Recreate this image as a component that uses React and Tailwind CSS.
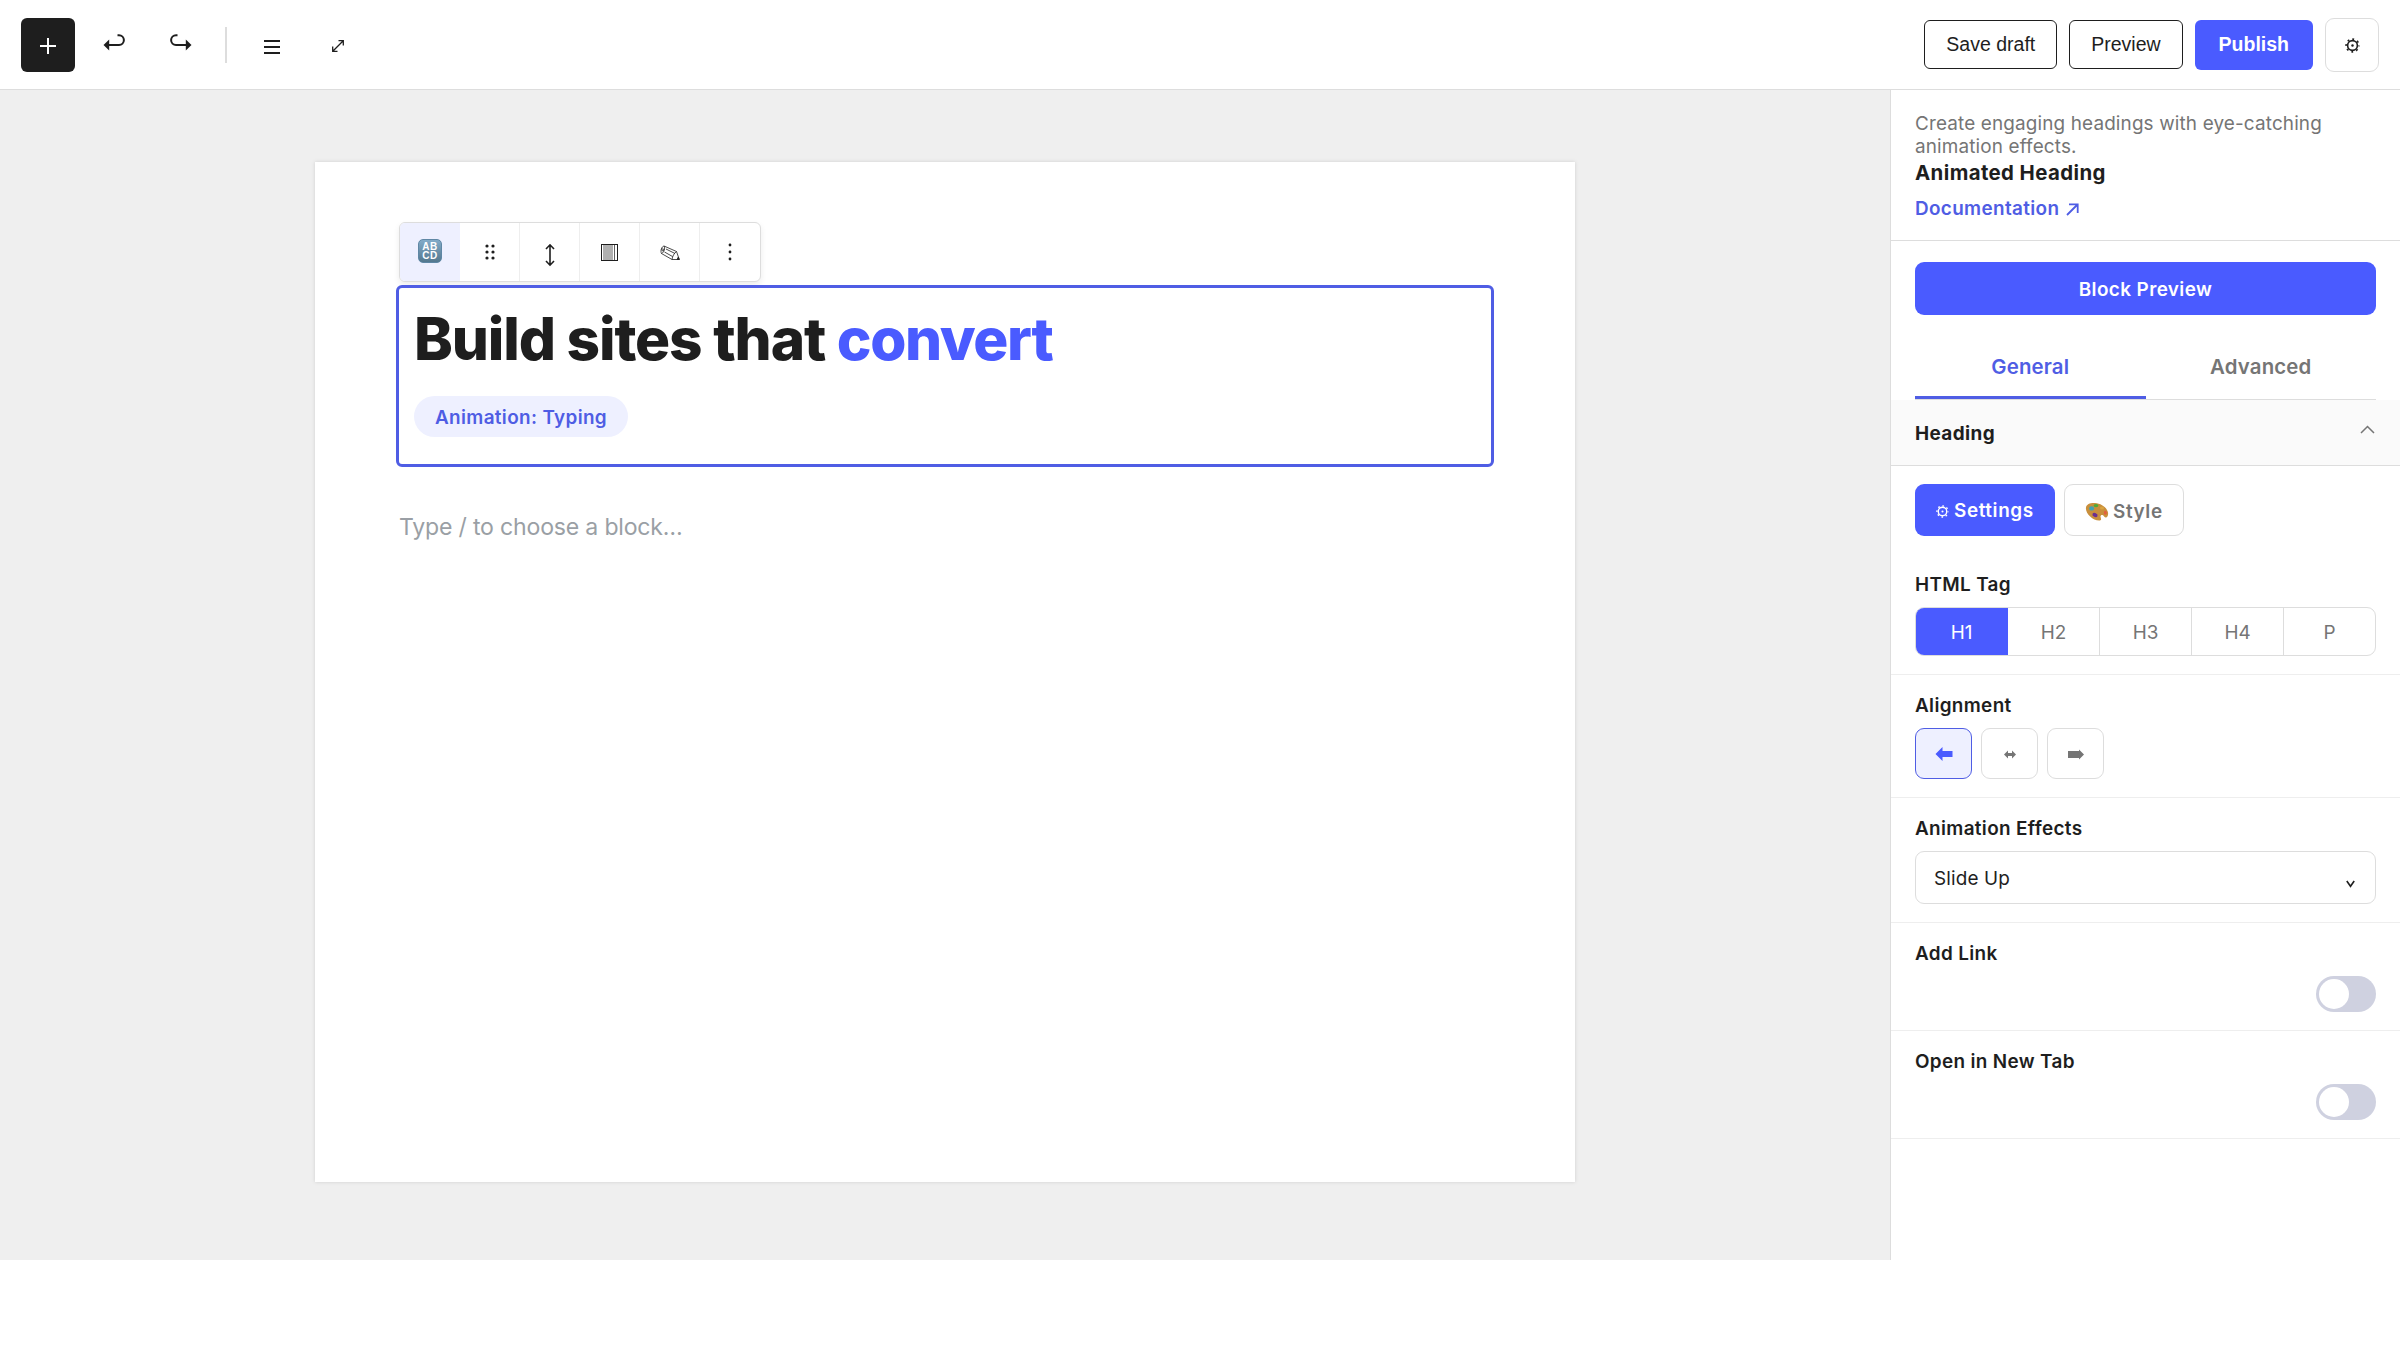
const tags = ["H1", "H2", "H3", "H4", "P"];

function GearIcon({ size, className }) {
  return (
    <svg width={size} height={size} viewBox="0 0 16 16" fill="none" stroke="currentColor" className={className}>
      <circle cx="8" cy="8" r="5.2" strokeWidth="1.7" />
      <circle cx="8" cy="8" r="1.3" fill="currentColor" stroke="none" />
      <circle cx="8" cy="8" r="6.8" strokeWidth="1.8" strokeDasharray="2 3.34" strokeDashoffset="1" />
    </svg>
  );
}

function UndoIcon({ className }) {
  return (
    <svg width="24" height="20" viewBox="0 0 24 20" className={className}>
      <path d="M1.5 12 7.2 6.4V17.6Z" fill="currentColor" />
      <path d="M6 12H17A4.9 4.9 0 0 0 17 2.2H15.5" fill="none" stroke="currentColor" strokeWidth="2" />
    </svg>
  );
}

function PaletteIcon() {
  return (
    <svg width="24" height="20" viewBox="0 0 24 20">
      <path d="M1 5.5C1.5 2 5.5.8 10 1.1c6 .4 12 4.4 13 9.4.5 2.5-.5 4.5-1.800 5-1.5.4-2-1.3-3.2-2.3-1.2-.8-2.7 0-2.5 1.5.2 1.6 1.5 3.4-.7 3.8C8 19 0 11.5 1 5.5Z" fill="#c98f3c" />
      <ellipse cx="6.6" cy="6.4" rx="2.5" ry="2.2" fill="#3fa3b5" />
      <ellipse cx="11" cy="3.6" rx="2.4" ry="1.7" fill="#4faa35" />
      <ellipse cx="17" cy="6" rx="2" ry="1.5" fill="#d9a441" />
      <ellipse cx="20.3" cy="10.8" rx="1.5" ry="2" fill="#e2603f" />
      <ellipse cx="10" cy="13" rx="2.7" ry="2" fill="#6c2f8f" transform="rotate(25 10 13)" />
    </svg>
  );
}

function Toggle() {
  return (
    <div className="flex justify-end">
      <div className="h-9 w-[60px] rounded-full bg-[#cfd1e0] p-[3px]">
        <div className="size-[30px] rounded-full bg-white" />
      </div>
    </div>
  );
}

function TopBar() {
  return (
    <header className="flex h-[90px] items-center border-b border-[#dddddd] bg-white px-[21px]">
      <div className="flex items-center gap-3">
        <button className="flex size-[54px] items-center justify-center rounded-md bg-[#1e1e1e] text-white">
          <svg width="18" height="18" viewBox="0 0 18 18" stroke="currentColor" strokeWidth="2" className="mt-[3px]">
            <path d="M9 1V17M1 9H17" />
          </svg>
        </button>
        <button className="flex size-[54px] items-center justify-center">
          <UndoIcon className="mb-[4px]" />
        </button>
        <button className="flex size-[54px] items-center justify-center">
          <UndoIcon className="mb-[4px] ml-px -scale-x-100" />
        </button>
      </div>
      <div className="mx-[18px] h-9 w-[2px] bg-[#dddddd]" />
      <div className="flex items-center gap-3">
        <button className="flex size-[54px] items-center justify-center">
          <svg width="16" height="14" viewBox="0 0 16 14" fill="currentColor" className="mt-[4px]">
            <path d="M0 0H16V2H0ZM0 6H16V8H0ZM0 12H16V14H0Z" />
          </svg>
        </button>
        <button className="flex size-[54px] items-center justify-center">
          <svg width="14" height="14" viewBox="0 0 14 14" fill="none" stroke="currentColor" strokeWidth="1.3" className="mt-[2px]">
            <path d="M2 12 12 2M7.5 1.7H12.3V6.5M6.5 12.3H1.7V7.5" />
          </svg>
        </button>
      </div>
      <div className="ml-auto flex items-center gap-3 font-['Liberation_Sans',sans-serif] text-[19.5px]">
        <button className="mb-px h-[49px] rounded-md border border-[#1e1e1e] px-[21px] pt-px">Save draft</button>
        <button className="mb-px h-[49px] rounded-md border border-[#1e1e1e] px-[21px] pt-px">Preview</button>
        <button className="h-[50px] rounded-md bg-[#4a5bff] px-6 font-bold text-white">Publish</button>
        <button className="flex size-[54px] items-center justify-center rounded-[9px] border border-[#dddddd]">
          <GearIcon size={15} className="mt-[2px]" />
        </button>
      </div>
    </header>
  );
}

function BlockToolbar() {
  return (
    <div className="flex h-[60px] w-[362px] overflow-hidden rounded-md border border-[#dddddd] bg-white shadow-[0_3px_6px_rgba(0,0,0,0.08)]">
      <div className="flex w-[60px] items-center justify-center bg-[#eef0ff]">
        <div className="mb-[3px] flex size-6 flex-col items-center justify-center rounded-[5px] border border-[#5f87a5] bg-linear-to-b from-[#83acc9] to-[#54788f] font-['Liberation_Sans',sans-serif] text-[10px] leading-[9px] font-bold tracking-[0.5px] text-white">
          <span>AB</span>
          <span>CD</span>
        </div>
      </div>
      <div className="flex w-[60px] items-center justify-center border-r border-[#eeeeee]">
        <svg width="10" height="16" viewBox="0 0 10 16" fill="currentColor" className="mb-px">
          <circle cx="2" cy="2" r="1.6" />
          <circle cx="8" cy="2" r="1.6" />
          <circle cx="2" cy="8" r="1.6" />
          <circle cx="8" cy="8" r="1.6" />
          <circle cx="2" cy="14" r="1.6" />
          <circle cx="8" cy="14" r="1.6" />
        </svg>
      </div>
      <div className="flex w-[60px] items-center justify-center border-r border-[#eeeeee]">
        <svg width="10" height="24" viewBox="0 0 10 24" fill="none" stroke="currentColor" strokeWidth="1.6" className="mt-[6px]">
          <path d="M5 2V22M1 6 5 1.8 9 6M1 18 5 22.2 9 18" />
        </svg>
      </div>
      <div className="flex w-[60px] items-center justify-center border-r border-[#eeeeee]">
        <svg width="17" height="17" viewBox="0 0 17 17" fill="none" stroke="currentColor" className="mt-px">
          <rect x="0.5" y="0.5" width="16" height="16" />
          <path d="M3 1V16M5 1V16M7 1V16M9 1V16M11 1V16M13.5 1V16" strokeWidth="0.7" />
        </svg>
      </div>
      <div className="flex w-[60px] items-center justify-center border-r border-[#eeeeee]">
        <svg width="20" height="16" viewBox="0 0 20 16" fill="none" stroke="currentColor" strokeWidth="0.8" className="mt-[2px]">
          <path d="M4 1 16.5 6.5 19.3 14.5 12 14.5 1.5 8.5C.2 6 1.5 1.5 4 1ZM16.5 6.5C14 8.5 12.5 11 12 14.5M4 1C5.500 3 4 7.5 1.5 8.5M6 4 15 8.500M4.500 7 12.500 11.500" />
          <circle cx="2.8" cy="4.8" r="1" />
          <path d="M19.3 14.5 17 14.500 18.300 12Z" fill="currentColor" />
        </svg>
      </div>
      <div className="flex w-[60px] items-center justify-center">
        <svg width="4" height="18" viewBox="0 0 4 18" fill="currentColor">
          <circle cx="2" cy="2" r="1.4" />
          <circle cx="2" cy="9" r="1.4" />
          <circle cx="2" cy="16" r="1.4" />
        </svg>
      </div>
    </div>
  );
}

function Editor() {
  return (
    <main className="flex-1 bg-[#efefef] px-[315px] pt-[72px]">
      <div className="h-[1020px] bg-white px-[81px] pt-[60px] shadow-[0_0_4px_rgba(0,0,0,0.13)]">
        <div className="pl-[3px]">
          <BlockToolbar />
        </div>
        {/* selected block */}
        <div className="mt-[3px] h-[182px] rounded-md border-[3px] border-[#4f5de4] px-[15px] pt-[15px]">
          <h1 className="text-[58.5px] leading-[72px] font-extrabold tracking-[-1.12px] text-[#1e1e1e]">
            Build sites that <span className="tracking-[-1.4px] text-[#4a5bff]">convert</span>
          </h1>
          <span className="mt-[21px] inline-flex h-[41px] items-center rounded-full bg-[#eef0ff] px-[21px] pt-[3px] text-[18.9px] font-semibold tracking-[0.35px] text-[#4f5de4]">
            Animation: Typing
          </span>
        </div>
        <p className="mt-[42px] pl-[3px] text-[23.1px] leading-9 tracking-[-0.2px] text-[#9a9fa5]">Type / to choose a block…</p>
      </div>
    </main>
  );
}

function Field({ label, className, children }) {
  return (
    <section className={`border-b border-[#eeeeee] px-6 ${className}`}>
      <h3 className="text-[18.9px] leading-6 font-semibold tracking-[0.35px] text-[#1e1e1e]">{label}</h3>
      <div className="mt-[10px]">{children}</div>
    </section>
  );
}

function Sidebar() {
  return (
    <aside className="w-[510px] border-l border-[#dddddd] bg-white">
      <div className="h-[151px] border-b border-[#dddddd] px-6 pt-[22px]">
        <p className="text-[18.9px] leading-[23px] tracking-[0.15px] text-[#757575]">
          Create engaging headings with eye-catching
          <br />
          animation effects.
        </p>
        <h2 className="text-[20.4px] leading-[30px] font-bold tracking-[0.4px] text-[#1e1e1e]">Animated Heading</h2>
        <a className="mt-[9px] flex items-center gap-[7px] text-[18.9px] leading-6 font-semibold tracking-[0.35px] text-[#4f5de4]">
          Documentation
          <svg width="13" height="13" viewBox="0 0 13 13" fill="none" stroke="currentColor" strokeWidth="1.8">
            <path d="M1 12 11.5 1.5M3 1.3H11.7V10" />
          </svg>
        </a>
      </div>

      <div className="px-6 pt-[21px]">
        <button className="h-[53px] w-full rounded-[9px] bg-[#4a5bff] pt-[3px] text-[18.9px] font-semibold tracking-[0.4px] text-white">
          Block Preview
        </button>
        <div className="mt-[18px] flex h-[67px] border-b border-[#dddddd] text-[20.4px] font-semibold tracking-[0.15px]">
          <div className="flex flex-1 items-center justify-center border-b-[3px] border-[#4f5de4] pt-[5px] text-[#4f5de4]">General</div>
          <div className="flex flex-1 items-center justify-center pt-[2px] text-[#757575]">Advanced</div>
        </div>
      </div>

      <div className="flex h-[66px] items-center justify-between border-b border-[#dddddd] bg-[#fafafa] px-6 pt-[3px]">
        <span className="text-[18.9px] font-bold tracking-[0.4px] text-[#1e1e1e]">Heading</span>
        <svg width="15" height="9" viewBox="0 0 15 9" fill="none" stroke="#757575" strokeWidth="1.5" className="mr-px mb-[9px]">
          <path d="M1 8 7.5 1.5 14 8" />
        </svg>
      </div>

      <div className="flex gap-[9px] px-6 pt-[18px] text-[18.9px] font-semibold tracking-[0.6px]">
        <button className="flex h-[52px] w-[140px] items-center gap-[5px] rounded-[9px] bg-[#4a5bff] pt-[2px] pl-[21px] text-white">
          <GearIcon size={13} />
          Settings
        </button>
        <button className="flex h-[52px] w-[120px] items-center gap-[4px] rounded-[9px] border border-[#dddddd] pt-1 pl-[20px] text-[#757575]">
          <PaletteIcon />
          Style
        </button>
      </div>

      <Field label="HTML Tag" className="h-[139px] pt-[37px]">
        <div className="flex h-[49px] overflow-hidden rounded-[9px] border border-[#dddddd] text-[18.9px] text-[#757575]">
          {tags.map((tag) => (
            <div key={tag} className="flex flex-1 items-center justify-center border-r border-[#dddddd] pt-1 first:border-[#4a5bff] first:bg-[#4a5bff] first:text-white last:border-r-0">
              {tag}
            </div>
          ))}
        </div>
      </Field>

      <Field label="Alignment" className="h-[123px] pt-[19px]">
        <div className="flex gap-[9px] text-[#757575]">
          <button className="flex h-[51px] w-[57px] items-center justify-center rounded-[9px] border border-[#4f5de4] bg-[#eef0ff] text-[#4a5bff]">
            <svg width="18" height="14" viewBox="0 0 18 14" fill="currentColor">
              <path d="M0.5 7 7.5 0V4H17.5V10H7.5V14Z" />
            </svg>
          </button>
          <button className="flex h-[51px] w-[57px] items-center justify-center rounded-[9px] border border-[#dddddd]">
            <svg width="12" height="9" viewBox="0 0 12 9" fill="currentColor" className="mt-[2px]">
              <path d="M0 4.5 4 0.5V3H8V0.5L12 4.5 8 8.5V6H4V8.5Z" />
            </svg>
          </button>
          <button className="flex h-[51px] w-[57px] items-center justify-center rounded-[9px] border border-[#dddddd]">
            <svg width="16" height="11" viewBox="0 0 16 11" fill="currentColor" className="mt-[2px]">
              <path d="M0 2H11V0.5L16 5.5 11 10.5V9H0Z" />
            </svg>
          </button>
        </div>
      </Field>

      <Field label="Animation Effects" className="h-[125px] pt-[19px]">
        <div className="flex h-[53px] items-center justify-between rounded-[9px] border border-[#dddddd] pt-1 pr-5 pl-[18px] text-[18.9px] tracking-[0.15px] text-[#1e1e1e]">
          Slide Up
          <svg width="9" height="8" viewBox="0 0 9 8" fill="none" stroke="currentColor" strokeWidth="1.6" className="mt-[9px]">
            <path d="M0.8 1 4.5 6.3 8.2 1" />
          </svg>
        </div>
      </Field>

      <Field label="Add Link" className="h-[108px] pt-[19px]">
        <Toggle />
      </Field>
      <Field label="Open in New Tab" className="h-[108px] pt-[19px]">
        <Toggle />
      </Field>
    </aside>
  );
}

export default function App() {
  return (
    <div className="h-[1350px] w-[2400px] bg-white font-[Inter,sans-serif] text-[#1e1e1e]">
      <TopBar />
      <div className="flex h-[1170px]">
        <Editor />
        <Sidebar />
      </div>
    </div>
  );
}
